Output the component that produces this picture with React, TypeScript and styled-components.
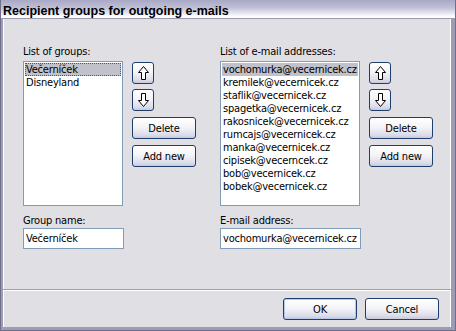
import React from 'react'
import styled, { createGlobalStyle } from 'styled-components'

const groups = ['Večerníček', 'Disneyland']
const emails = [
	'vochomurka@vecernicek.cz',
	'kremilek@vecernicek.cz',
	'staflik@vecernicek.cz',
	'spagetka@vecernicek.cz',
	'rakosnicek@vecernicek.cz',
	'rumcajs@vecernicek.cz',
	'manka@vecernicek.cz',
	'cipisek@vecerncek.cz',
	'bob@vecernicek.cz',
	'bobek@vecernicek.cz',
]

const FONT = '"DejaVu Sans Condensed", "DejaVu Sans", "Liberation Sans", sans-serif'

const Arrow = ({ down }: { down?: boolean }) => (
	<svg width="11" height="14" viewBox="0 0 11 14" style={{ transform: down ? 'scaleY(-1)' : undefined }}>
		<polygon points="5.5,0.5 10.5,6.5 7.5,6.5 7.5,13.5 3.5,13.5 3.5,6.5 0.5,6.5" fill="#fff" stroke="#000" strokeWidth="1" />
	</svg>
)

export default function App() {
	return <>
		<Global />
		<Window>
			<TitleBar>Recipient groups for outgoing e-mails</TitleBar>
			<Body>
				<Content>
					<Column>
						<Label>List of groups:</Label>
						<ListRow>
							<ListBox width={100}>
								{groups.map((g, i) => <Item key={g} selected={i === 0} focused={i === 0}>{g}</Item>)}
							</ListBox>
							<Buttons>
								<IconButton><Arrow /></IconButton>
								<IconButton><Arrow down /></IconButton>
								<SideButton>Delete</SideButton>
								<SideButton>Add new</SideButton>
							</Buttons>
						</ListRow>
						<FieldLabel>Group name:</FieldLabel>
						<Input width={100} defaultValue="Večerníček" />
					</Column>
					<Column>
						<Label>List of e-mail addresses:</Label>
						<ListRow>
							<ListBox width={140}>
								{emails.map((e, i) => <Item key={e} selected={i === 0}>{e}</Item>)}
							</ListBox>
							<Buttons>
								<IconButton><Arrow /></IconButton>
								<IconButton><Arrow down /></IconButton>
								<SideButton>Delete</SideButton>
								<SideButton>Add new</SideButton>
							</Buttons>
						</ListRow>
						<FieldLabel>E-mail address:</FieldLabel>
						<Input width={140} defaultValue="vochomurka@vecernicek.cz" />
					</Column>
				</Content>
				<Footer>
					<DialogButton default>OK</DialogButton>
					<DialogButton>Cancel</DialogButton>
				</Footer>
			</Body>
		</Window>
	</>
}

const Global = createGlobalStyle`
	html, body { margin: 0; padding: 0; }
	body {
		width: 456px;
		height: 331px;
		overflow: hidden;
		font-family: ${FONT};
		font-size: 11px;
		letter-spacing: -0.2px;
		color: #000;
	}
`
const Window = styled.div`
	box-sizing: border-box;
	width: 456px;
	height: 331px;
	display: flex;
	flex-direction: column;
	background: #e0dfe3;
	border: 1px solid #6f6f8c;
	border-top: none;
`
const TitleBar = styled.div`
	height: 19px;
	flex: none;
	box-sizing: border-box;
	padding: 4px 0 0 2px;
	font-family: "Liberation Sans", Arial, sans-serif;
	font-weight: bold;
	font-size: 12.5px;
	letter-spacing: 0;
	line-height: 14px;
	background: linear-gradient(#a9a9c7 0%, #bdbdd4 40%, #e8e8f1 75%, #ffffff 92%);
	border-bottom: 1px solid #9a9ab4;
`
const Body = styled.div`
	flex: 1;
	display: flex;
	flex-direction: column;
	border-left: 2px solid #9c9cb6;
	border-right: 4px solid #9c9cb6;
	border-bottom: 3px solid #9c9cb6;
	box-shadow: inset 1px 0 0 #fff, inset -1px 0 0 #fff;
`
const Content = styled.div`
	flex: 1;
	display: flex;
	gap: 24px;
	padding: 26px 0 0 20px;
	border-bottom: 1px solid #a0a0a8;
`
const Column = styled.div`
	display: flex;
	flex-direction: column;
`
const Label = styled.div`
	line-height: 13px;
	margin-bottom: 3px;
`
const FieldLabel = styled(Label)`
	margin: 8px 0 1px;
`
const ListRow = styled.div`
	display: flex;
	gap: 9px;
`
const ListBox = styled.div<{ width: number }>`
	box-sizing: border-box;
	width: ${p => p.width}px;
	height: 145px;
	background: #fff;
	border: 1px solid #7f9db9;
	padding: 1px;
`
const Item = styled.div<{ selected?: boolean; focused?: boolean }>`
	box-sizing: border-box;
	height: 13px;
	line-height: 13px;
	padding-left: 1px;
	white-space: nowrap;
	overflow: hidden;
	background: ${p => p.selected ? '#c1c1cb' : 'transparent'};
	outline: ${p => p.focused ? '1px dotted #555' : 'none'};
	outline-offset: -1px;
`
const Buttons = styled.div`
	display: flex;
	flex-direction: column;
	align-items: flex-start;
	padding-top: 1px;
`
const ButtonBase = styled.button`
	box-sizing: border-box;
	height: 22px;
	padding: 0;
	border: 1px solid #1e3f6e;
	border-radius: 3px;
	background: linear-gradient(#ffffff 0%, #f4f4f8 45%, #dcdce8 85%, #c8c8da 100%);
	font-family: ${FONT};
	font-size: 11px;
	letter-spacing: -0.2px;
	color: #000;
	display: flex;
	align-items: center;
	justify-content: center;
`
const IconButton = styled(ButtonBase)`
	width: 22px;
	margin-bottom: 5px;
`
const SideButton = styled(ButtonBase)`
	width: 64px;
	margin-top: 1px;
	margin-bottom: 5px;
`
const Footer = styled.div`
	display: flex;
	justify-content: flex-end;
	gap: 8px;
	padding: 7px 12px 7px 0;
	border-top: 1px solid #fff;
`
const DialogButton = styled(ButtonBase)<{ default?: boolean }>`
	width: 74px;
	box-shadow: ${p => p.default ? 'inset 0 0 0 1px #b8c8e8' : 'none'};
`
const Input = styled.input<{ width: number }>`
	box-sizing: border-box;
	width: ${p => p.width + 1}px;
	height: 21px;
	border: 1px solid #7f9db9;
	padding: 0 2px;
	font-family: ${FONT};
	font-size: 11px;
	letter-spacing: -0.2px;
	color: #000;
	outline: none;
`
